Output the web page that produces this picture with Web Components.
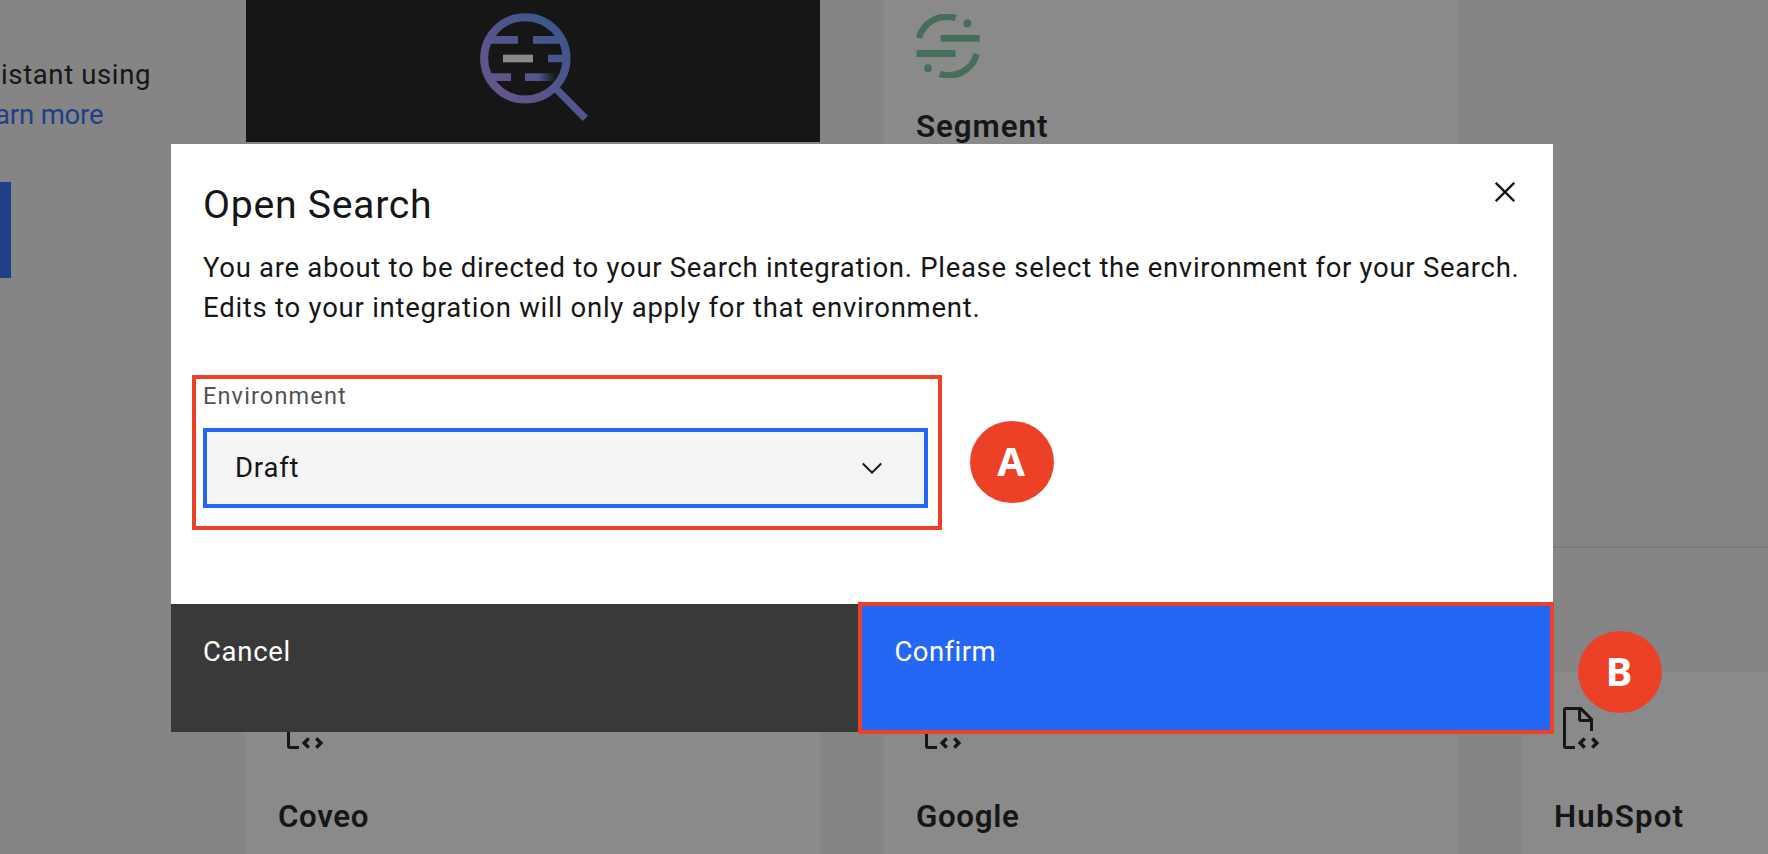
<!DOCTYPE html>
<html lang="en">
<head>
<meta charset="utf-8">
<title>Open Search</title>
<style>
html, body { margin: 0; height: 100%; overflow: hidden; }
body { position: relative; width: 1768px; height: 854px; background: #858585; color: #161616; font-family: Roboto, "Liberation Sans", sans-serif; }
integration-catalog { position: absolute; inset: 0; }
open-search-dialog { position: absolute; left: 171px; top: 144px; }
call-out.a { position: absolute; left: 970px; top: 421px; }
call-out.b { position: absolute; left: 1578px; top: 631px; }
</style>
</head>
<body>
<integration-catalog></integration-catalog>
<open-search-dialog></open-search-dialog>
<call-out class="a">A</call-out>
<call-out class="b">B</call-out>
<script>
const shadow = (el, html) => { el.attachShadow({ mode: 'open' }).innerHTML = html; };
const pen = document.createElement('canvas').getContext('2d');

// One line of text, tracked so that its ink spans the given number of pixels.
customElements.define('tracked-text', class extends HTMLElement {
  connectedCallback() {
    if (this.shadowRoot) return;
    shadow(this, '<style>:host{display:block;white-space:nowrap;font-kerning:normal;font-variant-ligatures:none}</style><slot></slot>');
    const cs = getComputedStyle(this), text = this.textContent;
    pen.font = `${cs.fontWeight} ${cs.fontSize} ${cs.fontFamily}`;
    const m = pen.measureText(text);
    const ink = m.actualBoundingBoxLeft + m.actualBoundingBoxRight;
    this.style.letterSpacing = ((+this.getAttribute('span') - ink) / (text.length - 1)).toFixed(3) + 'px';
    this.style.textIndent = m.actualBoundingBoxLeft.toFixed(2) + 'px';
  }
});

customElements.define('call-out', class extends HTMLElement {
  connectedCallback() {
    shadow(this, `<style>:host{display:flex;width:84px;height:82px;border-radius:50%;background:#ec4127;color:#fff;align-items:center;justify-content:center;font:bold 40px/54px "Noto Sans",sans-serif}span{padding-bottom:2px;margin-left:-2px}</style><span><slot></slot></span>`);
  }
});

customElements.define('code-file-icon', class extends HTMLElement {
  connectedCallback() {
    shadow(this, `<style>:host{display:block;width:48px;height:48px}svg{display:block}</style>
    <svg width="48" height="48" viewBox="0 0 48 48" fill="none" stroke="#161616" stroke-width="3">
      <path d="M21 43.4H12Q10.5 43.4 10.5 42V6Q10.5 4.6 12 4.6H26.8L37.5 15.3V27"/>
      <path d="M25.6 4.6V15Q25.6 16.6 27.2 16.6H37.5"/>
      <path d="M30.7 34.4L26.2 39L30.7 43.6M38.300 34.4L42.8 39L38.300 43.6" stroke-width="3.5"/>
    </svg>`);
  }
});

customElements.define('search-logo', class extends HTMLElement {
  connectedCallback() {
    shadow(this, `<style>:host{display:block;width:150px;height:142px;overflow:hidden}svg{display:block}</style>
    <svg width="150" height="150" viewBox="0 0 450 450">
      <defs>
        <linearGradient id="g" gradientUnits="userSpaceOnUse" x1="110" y1="290" x2="290" y2="80"><stop offset="0" stop-color="#66558a"/><stop offset="1" stop-color="#3e568c"/></linearGradient>
        <linearGradient id="h" gradientUnits="userSpaceOnUse" x1="235" y1="0" x2="288" y2="0"><stop offset="0" stop-color="#161616" stop-opacity="0"/><stop offset="1" stop-color="#161616"/></linearGradient>
      </defs>
      <g fill="url(#g)">
        <path d="M92 108H174V131H88zM219 108H292L302 131H219zM264 164H312V187H264zM88 220H153V243H96zM195 220H290V243H195z"/>
      </g>
      <path d="M235 218H291V245H235z" fill="url(#h)"/>
      <circle cx="196" cy="175" r="123.5" fill="none" stroke="url(#g)" stroke-width="24"/>
      <path d="M286 264L376 355" stroke="#51578c" stroke-width="22"/>
      <path d="M129 164H219V187H129z" fill="#8a8a8a"/>
    </svg>`);
  }
});

customElements.define('segment-logo', class extends HTMLElement {
  connectedCallback() {
    shadow(this, `<style>:host{display:block;width:64px;height:64px}svg{display:block}</style>
    <svg width="64" height="64" viewBox="349 42 192 192" fill="#456f5a">
      <path d="M358 114A86 86 0 0 1 468 54.500M531 162A86 86 0 0 1 420 221.500" fill="none" stroke="#456f5a" stroke-width="19.500"/>
      <path d="M423 105H540V125.500H423zM351 150H467.500V171H351z"/>
      <circle cx="503" cy="70.500" r="12"/><circle cx="385" cy="205" r="12"/>
    </svg>`);
  }
});

customElements.define('integration-card', class extends HTMLElement {
  connectedCallback() {
    shadow(this, `<style>
    :host{display:flex;flex-direction:column;box-sizing:border-box;width:574px;padding:32px;background:#8a8a8a;gap:44px}
    :host([dark]){background:#161616;padding:0;align-items:center}
    :host([first]){padding:14px 33px 0;gap:28px}
    ::slotted(tracked-text){font-size:31.300px;font-weight:600;line-height:42px}
    </style><slot name="icon"></slot><slot></slot>`);
  }
});

customElements.define('integration-catalog', class extends HTMLElement {
  connectedCallback() {
    shadow(this, `<style>
    :host{display:flex;overflow:hidden;background:#858585}
    aside{width:246px;flex:none;display:flex;flex-direction:column;font-size:27.500px;line-height:40px;padding-top:54.600px;box-sizing:border-box}
    .link{color:#1f4088}
    .intro{display:flex;flex-direction:column;align-items:flex-start}
    .cta{width:11px;height:96px;margin-top:47.400px;background:#1f4088}
    main{flex:none;display:flex;flex-direction:column}
    .row{display:grid;grid-template-columns:574px 574px 574px;column-gap:64px}
    .top{height:546px;grid-template-rows:142px;align-items:start}
    .top integration-card{height:142px}
    .top [first]{height:482px}
    hr{border:0;height:2px;width:100%;margin:0 0 124px;background:#7b7b7b}
    .bottom{height:182px}
    </style>
    <aside><div class="intro"><tracked-text span="147" style="margin-left:2px">istant using</tracked-text><tracked-text span="107" class="link" style="margin-left:-4px">arn more</tracked-text></div><div class="cta"></div></aside>
    <main>
      <div class="row top">
        <integration-card dark><search-logo slot="icon" style="margin-left:4px"></search-logo></integration-card>
        <integration-card first><segment-logo slot="icon" style="margin-left:-1px"></segment-logo><tracked-text span="130">Segment</tracked-text></integration-card>
      </div>
      <hr>
      <div class="row bottom">
        <integration-card><code-file-icon slot="icon"></code-file-icon><tracked-text span="88.700" style="margin-left:1px">Coveo</tracked-text></integration-card>
        <integration-card><code-file-icon slot="icon"></code-file-icon><tracked-text span="101" style="margin-left:1px">Google</tracked-text></integration-card>
        <integration-card><code-file-icon slot="icon"></code-file-icon><tracked-text span="126.500" style="margin-left:2px">HubSpot</tracked-text></integration-card>
      </div>
    </main>`);
  }
});

customElements.define('environment-select', class extends HTMLElement {
  connectedCallback() {
    shadow(this, `<style>
    :host{display:block;box-sizing:border-box;width:750px;height:155px;border:4px solid #ec4127;padding:0 7px}
    .label{font-size:23.500px;line-height:32px;color:#525252;padding:1.200px 0 15.800px 1px}
    .field{box-sizing:border-box;width:725px;height:80px;border:4px solid #2467f5;background:#f4f4f4;display:flex;justify-content:space-between;align-items:center;padding:0 42px 0 30px;font-size:27.500px;line-height:40px}
    svg{display:block}
    </style>
    <tracked-text class="label" span="141">Environment</tracked-text>
    <div class="field"><tracked-text span="61.500">Draft</tracked-text>
    <svg width="20" height="20" viewBox="0 0 20 20" fill="none" stroke="#161616" stroke-width="2"><path d="M.8 5.500L10 14.700L19.200 5.500"/></svg></div>`);
  }
});

customElements.define('open-search-dialog', class extends HTMLElement {
  connectedCallback() {
    shadow(this, `<style>
    :host{display:flex;flex-direction:column;width:1382px;height:588px;background:#fff;font-size:27.500px;line-height:40px}
    .head{display:flex;justify-content:space-between;padding:36px 38px 0 34px}
    .title{font-size:39.200px;line-height:50px}
    .close{display:block;margin-top:2px}
    .copy{padding:18px 0 0 32px}
    environment-select{margin:47px 0 0 21px}
    .foot{display:flex;height:132px;margin:auto -1px -2px 0;align-items:flex-end;color:#fff}
    .cancel{width:687px;height:128px;box-sizing:border-box;padding:28.400px 33px;background:#393939;align-self:center}
    .confirm{flex:1;height:132px;box-sizing:border-box;border:4px solid #ec4127;padding:26.400px 33.500px;background:#2467f5}
    </style>
    <div class="head"><tracked-text class="title" span="224">Open Search</tracked-text>
    <svg class="close" width="20" height="20" viewBox="0 0 20 20" stroke="#161616" stroke-width="2.300"><path d="M.8.800L19.200 19.200M19.200.800L.8 19.200"/></svg></div>
    <div class="copy"><tracked-text span="1314.500">You are about to be directed to your Search integration. Please select the environment for your Search.</tracked-text>
    <tracked-text span="773.500" style="margin-left:2px">Edits to your integration will only apply for that environment.</tracked-text></div>
    <environment-select></environment-select>
    <div class="foot"><div class="cancel"><tracked-text span="84.500">Cancel</tracked-text></div><div class="confirm"><tracked-text span="98">Confirm</tracked-text></div></div>`);
  }
});
</script>
</body>
</html>
